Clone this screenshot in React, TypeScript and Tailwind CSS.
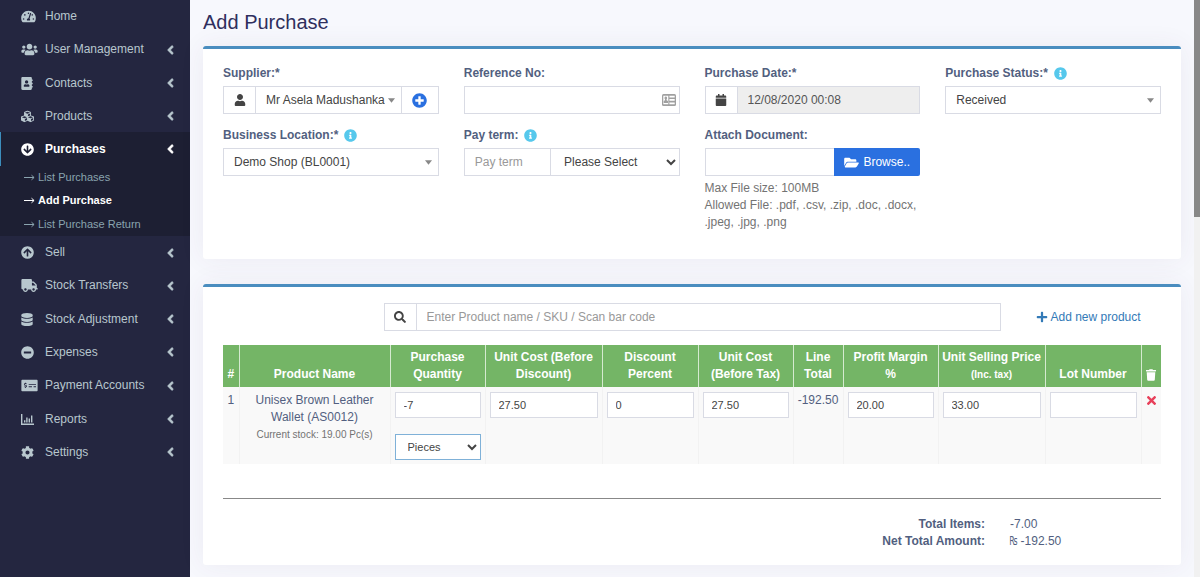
import type { ReactNode } from 'react'
import type { IconType } from 'react-icons'
import {
  FaAddressBook,
  FaAngleLeft,
  FaArrowCircleDown,
  FaArrowCircleUp,
  FaCalendar,
  FaCog,
  FaCubes,
  FaDatabase,
  FaFolderOpen,
  FaInfoCircle,
  FaMinusCircle,
  FaMoneyCheckAlt,
  FaPlus,
  FaPlusCircle,
  FaSearch,
  FaTachometerAlt,
  FaTimes,
  FaTrash,
  FaTruck,
  FaUser,
  FaUsers,
} from 'react-icons/fa'

type MenuItem = { label: string; icon: IconType; size: string; leaf?: boolean }

const ReportsIcon = ({ className }: { className?: string }) => (
  <svg viewBox="0 0 13 11" className={className} fill="currentColor">
    <path d="M0 0h1.4v9.6H13V11H0zM3 6.2h1.4v2.2H3zM5.2 3.4h1.4v5H5.2zM7.6 4.6H9v3.8H7.6zM10 1.4h1.4v7H10z" />
  </svg>
)

const topMenu: MenuItem[] = [
  { label: 'Home', icon: FaTachometerAlt, size: 'h-[13px] w-[15px]', leaf: true },
  { label: 'User Management', icon: FaUsers, size: 'h-[13px] w-[17px]' },
  { label: 'Contacts', icon: FaAddressBook, size: 'h-[13px] w-[12px]' },
  { label: 'Products', icon: FaCubes, size: 'h-[13px] w-[13px]' },
]

const bottomMenu: MenuItem[] = [
  { label: 'Sell', icon: FaArrowCircleUp, size: 'h-[13px] w-[13px]' },
  { label: 'Stock Transfers', icon: FaTruck, size: 'h-[13px] w-[17px]' },
  { label: 'Stock Adjustment', icon: FaDatabase, size: 'h-[13px] w-[12px]' },
  { label: 'Expenses', icon: FaMinusCircle, size: 'h-[13px] w-[13px]' },
  { label: 'Payment Accounts', icon: FaMoneyCheckAlt, size: 'h-[13px] w-[17px]' },
  { label: 'Reports', icon: ReportsIcon, size: 'h-[11px] w-[13px]' },
  { label: 'Settings', icon: FaCog, size: 'h-[13px] w-[13px]' },
]

const purchaseMenu = ['List Purchases', 'Add Purchase', 'List Purchase Return']

const field = 'h-7 min-w-0 border border-[#d9dbe4] bg-white text-[#444] placeholder:text-[#999] focus:outline-none'
const cellInput = 'block h-[26px] w-full border border-[#d9dbe4] bg-white px-2 text-[11px] text-[#444] focus:outline-none'
const addon = 'flex h-7 w-8 shrink-0 items-center justify-center border border-r-0 border-[#d9dbe4] text-[#444]'

const MenuLink = ({ label, icon: Icon, size, leaf }: MenuItem) => (
  <a href="#" className="flex h-full items-center pl-[21px] pr-4">
    <span className="w-6 shrink-0">
      <Icon className={size} />
    </span>
    <span className="flex-1">{label}</span>
    {!leaf && <FaAngleLeft className="h-[14px] w-[7px] stroke-current stroke-[16px]" />}
  </a>
)

const Field = ({ id, label, info, children }: { id: string; label: string; info?: boolean; children: ReactNode }) => (
  <div>
    <div className="mb-1 flex h-[18px] items-center gap-[6px]">
      <label htmlFor={id} className="font-bold">
        {label}
      </label>
      {info && <FaInfoCircle className="h-[13px] w-[13px] text-[#56c8ec]" />}
    </div>
    {children}
  </div>
)

const CaretSelect = ({ id, value }: { id: string; value: string }) => (
  <div className="relative min-w-0 flex-1">
    <select id={id} className={`${field} block w-full appearance-none pl-[10px] pr-4`}>
      <option>{value}</option>
    </select>
    <svg viewBox="0 0 8 5" className="pointer-events-none absolute right-[7px] top-3 h-[5px] w-[7px] fill-[#888]">
      <path d="M0 0h8L4 5z" />
    </svg>
  </div>
)

const Box = ({ children }: { children: ReactNode }) => (
  <section className="rounded-[3px] border-t-[3px] border-[#4a8dbf] bg-white px-5 shadow-[0_0_26px_rgba(82,63,105,0.07)]">
    {children}
  </section>
)

const th = 'border-l border-[#d5ead0] px-1 py-1 align-bottom font-bold first:border-l-0'
const td = 'border-l border-[#f2f2f2] px-1 pt-[5px] align-top first:border-l-0'

const App = () => {
  return (
    <div className="flex min-h-screen bg-[#f7f8fd] font-['Liberation_Sans',Arial,sans-serif] text-[12px] leading-[17px] text-[#525f80]">
      <aside className="w-[190px] shrink-0 bg-[#242640] text-[#b8c7ce]">
        <nav>
          <ul className="grid h-[133px] auto-rows-fr">
            {topMenu.map((item) => (
              <li key={item.label}>
                <MenuLink {...item} />
              </li>
            ))}
          </ul>
          <div className="bg-[#1d1f33]">
            <div className="-mt-px h-[34px] border-l border-[#3c8dbc] bg-[#1d1f33] font-bold text-white [&>a]:pl-5">
              <MenuLink label="Purchases" icon={FaArrowCircleDown} size="h-[13px] w-[13px]" />
            </div>
            <ul className="grid h-[70px] auto-rows-fr text-[11px] text-[#8aa4af]">
              {purchaseMenu.map((label) => (
                <li key={label} className={label === 'Add Purchase' ? 'font-bold text-white' : ''}>
                  <a href="#" className="flex h-full items-center gap-[3px] pl-6">
                    <svg viewBox="0 0 11 7" className="h-[7px] w-[11px] fill-none stroke-current">
                      <path d="M0 3.5h10M7.5 1.2l2.6 2.3-2.6 2.3" />
                    </svg>
                    {label}
                  </a>
                </li>
              ))}
            </ul>
          </div>
          <ul className="grid h-[233px] auto-rows-fr">
            {bottomMenu.map((item) => (
              <li key={item.label}>
                <MenuLink {...item} />
              </li>
            ))}
          </ul>
        </nav>
      </aside>

      <main className="min-w-0 flex-1 px-[13px] pb-3">
        <h1 className="pb-[11px] pt-[10px] text-[20px] leading-[25px] text-[#2f2f5e]">Add Purchase</h1>

        <form className="space-y-[25px]">
          <Box>
            <div className="grid grid-cols-4 gap-x-[25px] gap-y-3 pb-7 pt-[15px]">
              <Field id="supplier" label="Supplier:*">
                <div className="flex">
                  <span className={addon}>
                    <FaUser className="h-3 w-3" />
                  </span>
                  <CaretSelect id="supplier" value="Mr Asela Madushanka" />
                  <button
                    type="button"
                    aria-label="Add supplier"
                    className="flex h-7 w-[37px] shrink-0 items-center justify-center border border-l-0 border-[#d9dbe4] text-[#2a70e0]"
                  >
                    <FaPlusCircle className="h-[15px] w-[15px]" />
                  </button>
                </div>
              </Field>
              <Field id="reference" label="Reference No:">
                <div className="relative">
                  <input id="reference" className={`${field} w-full pl-[10px] pr-8`} />
                  <svg viewBox="0 0 14 12" className="absolute right-1 top-2 h-3 w-[14px]">
                    <rect width="14" height="12" rx="1.5" fill="#a0a0a0" />
                    <path
                      d="M1.3 1.7h5v8.6h-5zM7.4 1.7h5.3v1.8H7.4zM7.4 5h5.3v1.8H7.4zM7.4 8.4h5.3v1.9H7.4z"
                      fill="#fff"
                    />
                    <path d="M3.8 2.6a1.3 1.5 0 0 1 .8 2.7v.9l1.4.9v2H1.7v-2L3 6.200v-.9a1.300 1.500 0 0 1 .8-2.700z" fill="#a0a0a0" />
                  </svg>
                </div>
              </Field>
              <Field id="date" label="Purchase Date:*">
                <div className="flex">
                  <span className={addon}>
                    <FaCalendar className="h-3 w-3" />
                  </span>
                  <input
                    id="date"
                    readOnly
                    defaultValue="12/08/2020 00:08"
                    className="h-7 min-w-0 flex-1 border border-[#d9dbe4] bg-[#eee] px-[10px] text-[#555] focus:outline-none"
                  />
                </div>
              </Field>
              <Field id="status" label="Purchase Status:*" info>
                <CaretSelect id="status" value="Received" />
              </Field>
              <Field id="location" label="Business Location:*" info>
                <CaretSelect id="location" value="Demo Shop (BL0001)" />
              </Field>
              <Field id="payterm" label="Pay term:" info>
                <div className="flex">
                  <input id="payterm" placeholder="Pay term" className={`${field} w-2/5 border-r-0 px-[10px]`} />
                  <select aria-label="Pay term period" className={`${field} flex-1 pl-[9px]`}>
                    <option>Please Select</option>
                  </select>
                </div>
              </Field>
              <Field id="document" label="Attach Document:">
                <div className="flex">
                  <input id="document" className={`${field} flex-1 border-r-0`} />
                  <button
                    type="button"
                    className="flex h-7 w-[86px] items-center justify-center gap-1 rounded-r-[2px] bg-[#2a70e0] text-white"
                  >
                    <FaFolderOpen className="h-[13px] w-[15px]" />
                    Browse..
                  </button>
                </div>
                <p className="mt-1 text-[#737373]">
                  Max File size: 100MB
                  <br />
                  Allowed File: .pdf, .csv, .zip, .doc, .docx, .jpeg, .jpg, .png
                </p>
              </Field>
            </div>
          </Box>

          <Box>
            <div className="grid grid-cols-12 gap-x-[25px] pb-[14px] pt-4">
              <div className="col-span-8 col-start-3 flex">
                <span className={addon}>
                  <FaSearch className="h-3 w-3" />
                </span>
                <input
                  aria-label="Search product"
                  placeholder="Enter Product name / SKU / Scan bar code"
                  className={`${field} flex-1 px-[10px]`}
                />
              </div>
              <a href="#" className="col-span-2 flex items-center gap-[3px] whitespace-nowrap pl-[10px] text-[#337ab7]">
                <FaPlus className="h-3 w-3" />
                Add new product
              </a>
            </div>

            <table className="w-full table-fixed text-center">
              <colgroup>
                <col className="w-[16px]" />
                <col className="w-[151px]" />
                <col className="w-[95px]" />
                <col className="w-[117px]" />
                <col className="w-[96px]" />
                <col className="w-[95px]" />
                <col className="w-[50px]" />
                <col className="w-[95px]" />
                <col className="w-[107px]" />
                <col className="w-[96px]" />
                <col className="w-[20px]" />
              </colgroup>
              <thead className="bg-[#74b566] text-white">
                <tr>
                  <th className={th}>#</th>
                  <th className={th}>Product Name</th>
                  <th className={th}>Purchase Quantity</th>
                  <th className={th}>Unit Cost (Before Discount)</th>
                  <th className={th}>Discount Percent</th>
                  <th className={th}>
                    Unit Cost
                    <br />
                    (Before Tax)
                  </th>
                  <th className={th}>Line Total</th>
                  <th className={th}>Profit Margin %</th>
                  <th className="border-l border-[#d5ead0] py-1 align-bottom font-bold">
                    <span className="whitespace-nowrap">Unit Selling Price</span>
                    <br />
                    <small className="text-[10px]">(Inc. tax)</small>
                  </th>
                  <th className={th}>Lot Number</th>
                  <th className={th} aria-label="Remove">
                    <FaTrash className="mx-auto mb-[2px] h-3 w-[10px]" />
                  </th>
                </tr>
              </thead>
              <tbody className="bg-[#f9f9f9]">
                <tr>
                  <td className={td}>1</td>
                  <td className={td}>
                    Unisex Brown Leather Wallet (AS0012)
                    <br />
                    <small className="text-[10px] text-[#737373]">Current stock: 19.00 Pc(s)</small>
                  </td>
                  <td className={td}>
                    <input aria-label="Purchase quantity" defaultValue="-7" className={cellInput} />
                    <select
                      aria-label="Unit"
                      className="mb-1 mt-4 block h-[26px] w-full border border-[#7fb1d8] bg-white pl-2 text-[11px] text-[#444] focus:outline-none"
                    >
                      <option>Pieces</option>
                    </select>
                  </td>
                  <td className={td}>
                    <input aria-label="Unit cost before discount" defaultValue="27.50" className={cellInput} />
                  </td>
                  <td className={td}>
                    <input aria-label="Discount percent" defaultValue="0" className={cellInput} />
                  </td>
                  <td className={td}>
                    <input aria-label="Unit cost before tax" defaultValue="27.50" className={cellInput} />
                  </td>
                  <td className={td}>-192.50</td>
                  <td className={td}>
                    <input aria-label="Profit margin" defaultValue="20.00" className={cellInput} />
                  </td>
                  <td className={td}>
                    <input aria-label="Unit selling price" defaultValue="33.00" className={cellInput} />
                  </td>
                  <td className={td}>
                    <input aria-label="Lot number" className={cellInput} />
                  </td>
                  <td className={td}>
                    <button type="button" aria-label="Remove row" className="mx-auto flex h-[17px] items-center text-[#e8405a]">
                      <FaTimes className="h-[13px] w-[9px]" preserveAspectRatio="xMidYMid slice" />
                    </button>
                  </td>
                </tr>
              </tbody>
            </table>

            <hr className="mb-[17px] mt-[34px] border-[#888]" />

            <dl className="grid grid-cols-[762px_1fr] gap-x-[25px] pb-[15px]">
              <dt className="text-right font-bold">Total Items:</dt>
              <dd>-7.00</dd>
              <dt className="text-right font-bold">Net Total Amount:</dt>
              <dd>
                <span className="font-['DejaVu_Sans_Mono',monospace]">₨</span> -192.50
              </dd>
            </dl>
          </Box>
        </form>
      </main>

      <div className="w-[6px] shrink-0 bg-[#f1f1f1]">
        <div className="h-[217px] bg-[#888]" />
      </div>
    </div>
  )
}

export default App
